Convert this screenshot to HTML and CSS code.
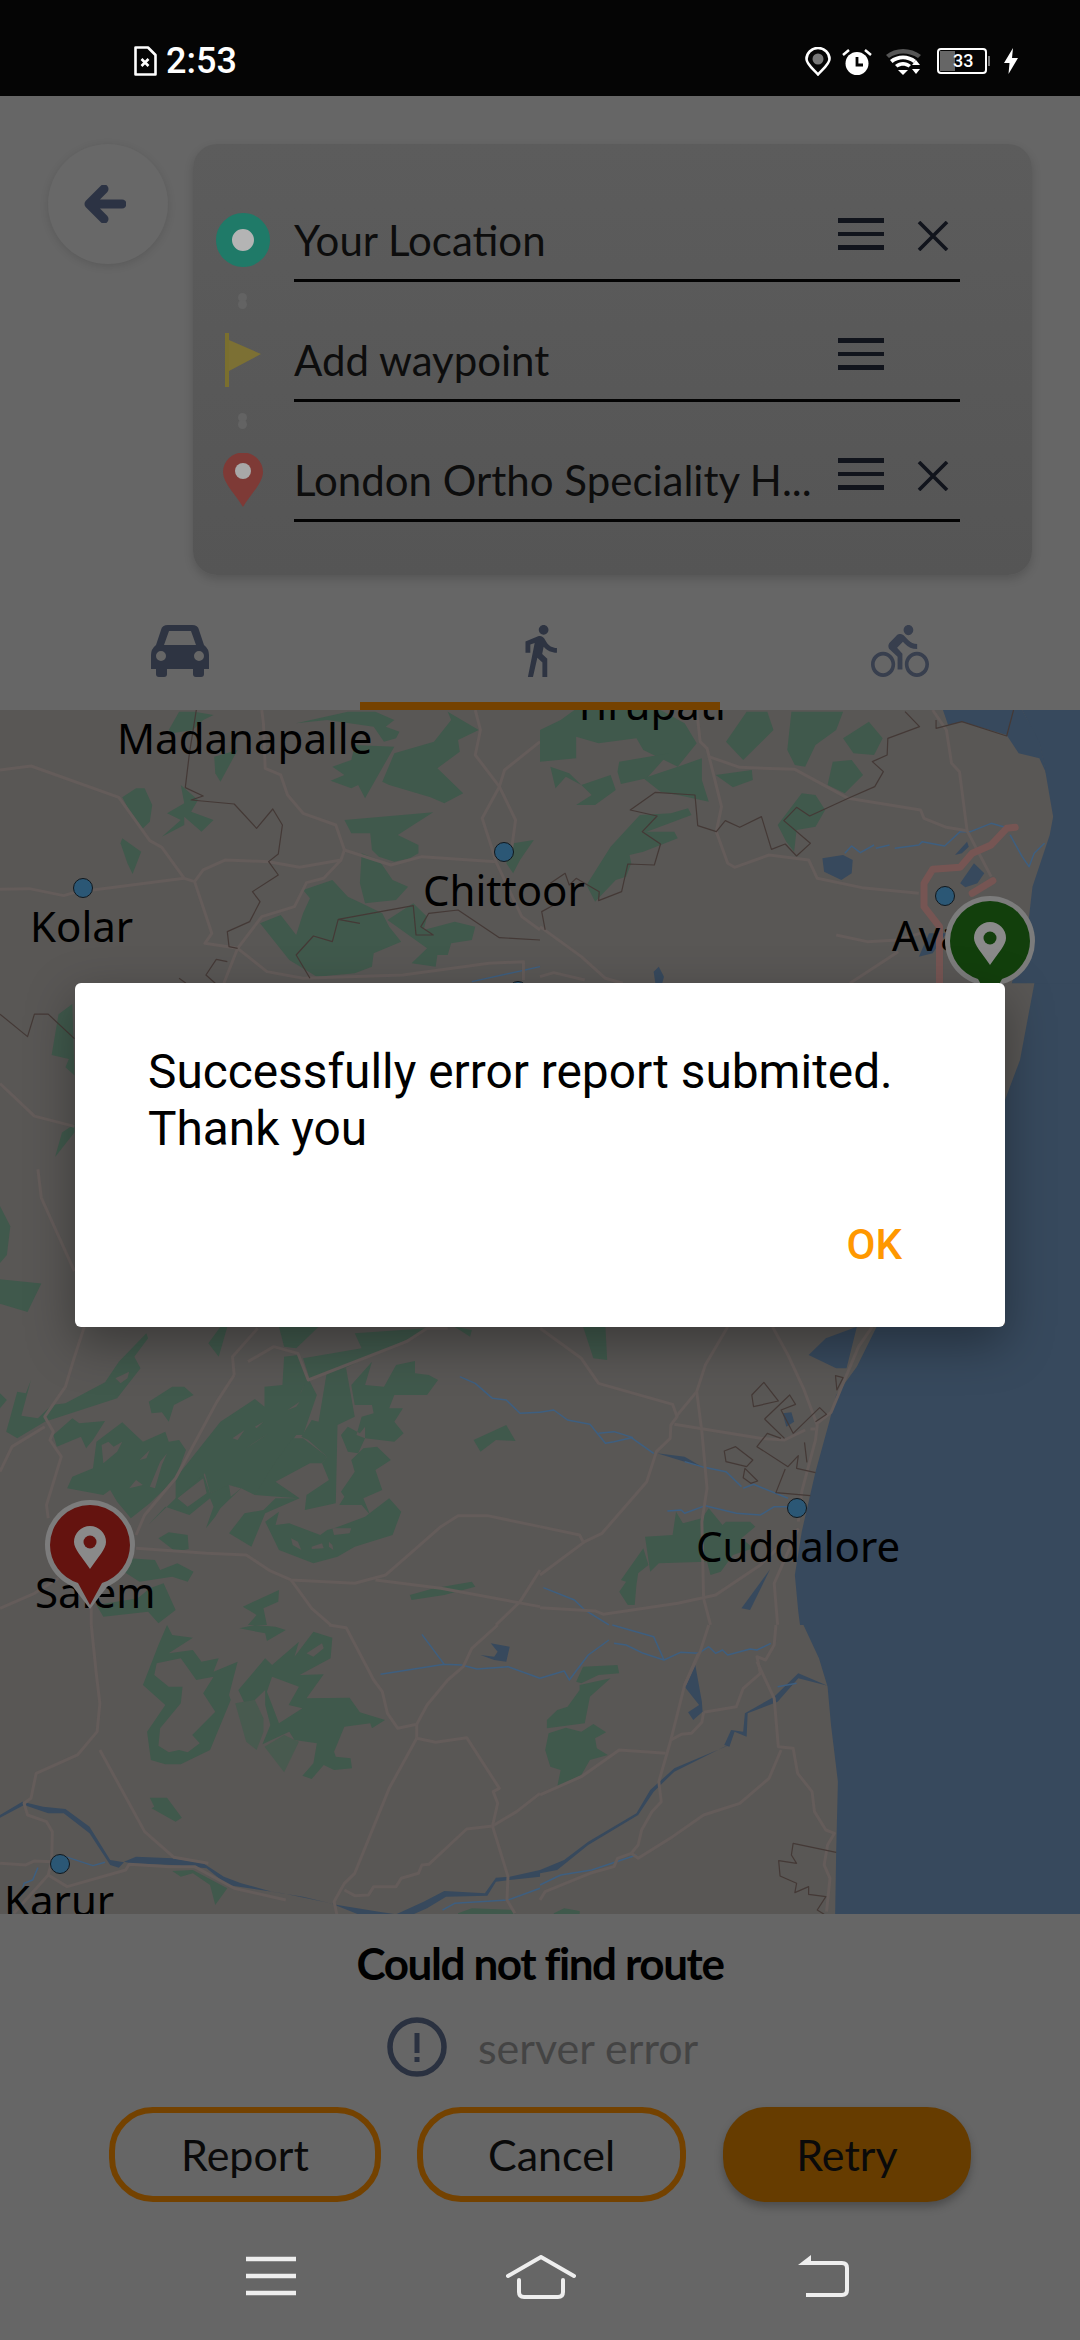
FILE: index.html
```html
<!DOCTYPE html>
<html>
<head>
    <meta charset="utf-8">
    <meta name="viewport" content="width=device-width,initial-scale=1">
    <title>Route</title>
    <link rel="stylesheet" href="styles.css">
</head>
<body>
<div class="phone">

    <div class="status">
        <svg class="st-sim" viewBox="0 0 24 30"><path d="M2.500 1.500H15L22.500 9V28.500H2.500Z" fill="none" stroke="#fff" stroke-width="2.600" stroke-linejoin="round"/><path d="M8.500 13L15.500 20M15.500 13L8.500 20" stroke="#fff" stroke-width="2.600"/></svg>
        <span class="st-time">2:53</span>
        <span class="st-fill"></span>
        <svg class="st-pin" viewBox="0 0 26 29"><path d="M13 27.500C8 22 1.500 17 1.500 12A11.500 11 0 0 1 24.500 12C24.500 17 18 22 13 27.500Z" fill="none" stroke="#fff" stroke-width="2.600"/><circle cx="13" cy="12" r="5.500" fill="#777"/></svg>
        <svg class="st-alarm" viewBox="0 0 30 27"><circle cx="15" cy="15.500" r="11.500" fill="#fff"/><path d="M1 7L7 2M29 7L23 2" stroke="#fff" stroke-width="2.500"/><path d="M15 9V17H21" fill="none" stroke="#050505" stroke-width="2.800"/></svg>
        <svg class="st-wifi" viewBox="0 0 37 27"><path d="M1 7C10 -1 26 -1 36 7L33 10C24 4 12 4 4 10Z" fill="#555"/><path d="M5 12C12 6 24 6 31 12L28.500 15C22 10 14 10 7.500 15Z" fill="#fff"/><path d="M10 17C15 13 21 13 26 17L23.500 19.500C20 17 16 17 12.500 19.500Z" fill="#fff"/><path d="M13 22H23L18 27Z" fill="#fff"/><path d="M27 17L31 12L35 17ZM27 21H35L31 26Z" fill="#fff"/></svg>
        <div class="st-batt"><div class="st-batt-box"><div class="st-batt-lvl"></div><span class="st-batt-num">33</span></div><div class="st-batt-tip"></div></div>
        <svg class="st-bolt" viewBox="0 0 14 26"><path d="M9 0L0 15H5.500L4.500 26L14 10H8Z" fill="#fff"/></svg>
    </div>

    <div class="app">

        <div class="top">
            <div class="searchrow">
                <div class="backbtn">
                    <svg width="42" height="38" viewBox="0 0 42 38"><path d="M38 19H8M20 4L5 19L20 34" fill="none" stroke="#2c3344" stroke-width="9" stroke-linecap="round" stroke-linejoin="round"/></svg>
                </div>
                <div class="card">
                    <div class="wp">
                        <div class="wp-icon"><svg width="54" height="54" viewBox="0 0 54 54"><circle cx="27" cy="27" r="19" fill="#b4b4b4" stroke="#1f7a68" stroke-width="16"/></svg></div>
                        <div class="field">
                            <span class="field-text">Your Location</span>
                            <span class="menu"><i></i><i></i><i></i></span>
                            <svg class="clear" viewBox="0 0 32 30"><path d="M2 1L30 29M30 1L2 29" stroke="#11141c" stroke-width="3.600"/></svg>
                        </div>
                    </div>
                    <div class="wp">
                        <div class="dots"><i></i><i></i></div>
                        <div class="wp-icon"><svg width="40" height="54" viewBox="0 0 40 54"><rect x="2" y="0" width="4" height="54" fill="#7a6f2e"/><path d="M6 7L38 21L6 38Z" fill="#7c7034"/></svg></div>
                        <div class="field">
                            <span class="field-text">Add waypoint</span>
                            <span class="menu"><i></i><i></i><i></i></span>
                            <span class="clear"></span>
                        </div>
                    </div>
                    <div class="wp">
                        <div class="dots"><i></i><i></i></div>
                        <div class="wp-icon"><svg width="40" height="54" viewBox="0 0 40 54"><path d="M20 54C13 42 0 30 0 19A20 19.500 0 0 1 40 19C40 30 27 42 20 54Z" fill="#7e3a36"/><circle cx="20" cy="18" r="8" fill="#a8a8a8"/></svg></div>
                        <div class="field">
                            <span class="field-text">London Ortho Speciality H...</span>
                            <span class="menu"><i></i><i></i><i></i></span>
                            <svg class="clear" viewBox="0 0 32 30"><path d="M2 1L30 29M30 1L2 29" stroke="#11141c" stroke-width="3.600"/></svg>
                        </div>
                    </div>
                </div>
            </div>
            <div class="tabs">
                <div class="tab">
                    <svg width="58" height="52" viewBox="0 0 58 52"><path fill-rule="evenodd" fill="#2e3442" d="M10 5Q11 0 17 0H41Q47 0 48 5L53 20Q58 24 58 30V44H53V49Q53 52 50 52H45Q42 52 42 49V44H16V49Q16 52 13 52H8Q5 52 5 49V44H0V30Q0 24 5 20ZM13 20H45L40 6H18ZM10 26A5 5 0 1 0 10 36A5 5 0 1 0 10 26ZM48 26A5 5 0 1 0 48 36A5 5 0 1 0 48 26Z"/></svg>
                </div>
                <div class="tab tab-on">
                    <svg width="34" height="52" viewBox="5 1.500 14 21.500"><path fill="#2e3442" d="M13.500 5.500c1.100 0 2-.9 2-2s-.9-2-2-2-2 .9-2 2 .9 2 2 2zM9.800 8.900L7 23h2.100l1.800-8 2.100 2v6h2v-7.500l-2.100-2 .6-3C14.800 12 16.800 13 19 13v-2c-1.900 0-3.500-1-4.300-2.400l-1-1.600c-.4-.6-1-1-1.700-1-.3 0-.5.100-.8.100L6 8.300V13h2V9.600l1.800-.7"/></svg>
                </div>
                <div class="tab">
                    <svg width="58" height="52" viewBox="0 1.500 24 20.500" preserveAspectRatio="none"><path fill="#383f4e" d="M15.500 5.500c1.100 0 2-.9 2-2s-.9-2-2-2-2 .9-2 2 .9 2 2 2zM5 12c-2.800 0-5 2.200-5 5s2.200 5 5 5 5-2.200 5-5-2.200-5-5-5zm0 8.500c-1.900 0-3.500-1.600-3.500-3.500s1.600-3.500 3.500-3.500 3.500 1.600 3.500 3.500-1.600 3.500-3.500 3.500zm5.800-10l2.400-2.400.8.800c1.300 1.300 3 2.100 5.100 2.100V9c-1.500 0-2.700-.6-3.600-1.500l-1.900-1.900c-.5-.4-1-.6-1.600-.6s-1.100.2-1.400.6L7.800 8.400c-.4.400-.6.900-.6 1.400 0 .6.200 1.100.6 1.400L11 14v5h2v-6.200l-2.200-2.300zM19 12c-2.800 0-5 2.200-5 5s2.200 5 5 5 5-2.200 5-5-2.200-5-5-5zm0 8.500c-1.900 0-3.500-1.600-3.500-3.500s1.600-3.500 3.500-3.500 3.500 1.600 3.500 3.500-1.600 3.500-3.500 3.500z"/></svg>
                </div>
            </div>
        </div>

        <div class="mapbox">
            <svg class="map" viewBox="0 710 1080 1204">
                <rect x="0" y="710" width="1080" height="1204" class="land"/>
                <path class="water" d="M1035 980L1020 1060L1005 1100V1340H1080V980Z"/>

                <!-- top left -->
                <g transform="translate(0 710) scale(.3444 .3333)">
                    <path class="forest" d="M490 60L520 5L565 5L620 15L590 30L560 60L500 70Z"/>
                    <path class="forest" d="M622 140L690 120L640 215L625 190Z"/>
                    <path class="forest" d="M860 40L1010 5L1090 5L1145 30L1120 50L1160 65L1150 85L1115 95L1085 50L950 30Z"/>
                    <path class="forest" d="M1300 5L1390 60L1330 90L1335 125L1270 175L1345 250L1290 280L1250 262L1130 225L1110 215L1145 130L1260 95L1310 30Z"/>
                    <path class="forest" d="M965 170L1020 150L1030 105L1145 110L1060 265L1040 225L1020 235L960 212L1000 195Z"/>
                    <path class="forest" d="M1000 330L1258 307L1200 345L1155 375L1215 405L1215 430L1190 445L1145 455L1100 440L1080 420L1075 370L1020 370Z"/>
                    <path class="forest" d="M355 262L395 235L420 235L442 285L435 335L410 360L385 320Z"/>
                    <path class="forest" d="M355 385L410 425L385 492L370 460L350 400Z"/>
                    <path class="forest" d="M525 225L575 270L555 305L620 330L585 365L535 320L535 345L470 380L525 330L485 310L535 280Z"/>
                    <path class="forest" d="M1050 430L1100 450L1140 510L1185 530L1150 570L1060 580L1045 520Z"/>
                    <path class="forest" d="M880 540L965 510L1010 560L1050 580L1110 610L1130 650L1165 695L1085 730L1080 770L1030 790L920 800L840 750L755 640L815 615L860 675L880 610L900 565Z"/>
                    <path class="forest" d="M1125 630L1200 580L1240 620L1230 660L1320 635L1380 650L1370 690L1310 700L1300 735L1270 735L1265 770L1195 760L1240 715Z"/>
                    <path class="forest" d="M1490 400L1550 390L1510 450L1490 490L1470 460Z"/>
                    <path class="river" d="M1370 815L1568 770"/>
                    <path class="road" d="M0 180L90 168L345 262L435 392L470 412L535 505L565 515L615 670L595 700L690 715L775 785L880 805L1170 795L1420 760L1520 755L1520 810"/>
                    <path class="road" d="M0 538L85 536L185 557L240 540L270 540L535 505"/>
                    <path class="road" d="M565 515L590 480L655 450L780 455L870 472L990 450L1000 420L975 345L880 310L835 255L815 195L770 175L765 40L760 0"/>
                    <path class="road" d="M1000 420L1135 465L1225 440L1440 455"/>
                    <path class="road" d="M990 450L940 505L890 518L855 590L760 620L690 715L650 820"/>
                    <path class="road" d="M1380 0L1395 60L1380 135L1450 230L1400 325L1430 420L1440 455L1515 620L1568 660"/>
                    <path class="road" d="M1568 95L1465 180L1450 230L1497 330L1485 420"/>
                    <path class="line" d="M570 0L550 130L538 233L590 258L555 270L680 282L745 355L792 297L820 345L808 432L780 455L808 495L733 545L755 575L725 635L660 665L665 710L690 715"/>
                    <path class="line" d="M660 755L628 748L598 795L625 820M520 805L540 820"/>
                    <path class="line" d="M900 805L860 735L910 678L965 695L982 628L1045 640M982 628L1200 587L1208 675L1258 675L1222 650L1245 610L1330 600L1450 683L1568 690"/>
                </g>

                <!-- top right -->
                <g transform="translate(540 710) scale(.3444 .3333)">
                    <path class="forest" d="M0 60L60 30L100 0L350 0L420 40L455 100L400 170L300 120L280 85L170 100L105 80L105 145L0 155Z"/>
                    <path class="forest" d="M230 155L375 130L310 205L235 222L225 185Z"/>
                    <path class="forest" d="M300 205L400 170L470 145L470 210L490 275L400 255L350 245Z"/>
                    <path class="forest" d="M540 95L600 5L660 5L678 60L590 150Z"/>
                    <path class="forest" d="M510 195L615 180L618 210L560 232Z"/>
                    <path class="forest" d="M730 5L880 5L860 60L800 105L770 170L740 165L718 120Z"/>
                    <path class="forest" d="M880 85L955 35L995 85L970 135L910 130Z"/>
                    <path class="forest" d="M850 155L905 150L938 195L885 250L835 225Z"/>
                    <path class="forest" d="M690 345L760 250L800 255L828 300L800 350L745 360L738 425L715 395Z"/>
                    <path class="forest" d="M120 225L205 195L220 240L160 285L105 285L150 255Z"/>
                    <path class="forest" d="M30 170L85 190L120 225L75 200L45 235Z"/>
                    <path class="forest" d="M135 525L205 410L290 315L380 310L430 295L440 315L310 365L390 365L400 385L300 425L260 435L265 460L250 500L220 510L160 575Z"/>
                    <path class="water" d="M1400 0H1568V820H1370L1420 620L1430 530L1480 375L1490 320L1465 170L1450 100Z"/>
                    <path class="water" d="M1170 0H1375L1355 75L1225 35L1185 45Z"/>
                    <path class="water" d="M1355 75L1390 130L1450 145L1470 190L1450 95L1400 0H1375Z"/>
                    <path class="water" d="M820 445L880 435L908 450L905 490L875 510L825 485Z"/>
                    <path class="water" d="M1205 435L1240 395L1245 410L1225 430Z"/>
                    <path class="water" d="M1220 520L1260 460L1290 490L1270 520L1235 532Z"/>
                    <path class="water" d="M1100 740L1130 670L1180 670L1140 730Z"/>
                    <path class="water" d="M330 785L345 770L360 800L355 820L335 820Z"/>
                    <path class="river" d="M885 430L905 408L930 428L970 405M975 415L1015 405M1030 415L1100 405L1110 395L1175 408L1220 365L1250 365L1310 340L1360 355"/>
                    <path class="river" d="M1365 375L1400 440L1420 470L1435 430L1465 400"/>
                    <path class="road" d="M455 0L465 95L485 115L527 290L512 365L545 460L565 472L665 435L780 450L805 505L935 533L1100 550"/>
                    <path class="road" d="M490 140L580 172L740 178L895 265L1105 300L1115 325L1180 352L1240 362"/>
                    <path class="road" d="M1140 0L1180 60L1195 160L1218 185L1240 362L1310 500"/>
                    <path class="road" d="M860 675L950 695L1040 690L1120 665M900 820L1040 725M0 650L120 740L190 805L240 820M0 800L40 788L130 810"/>
                    <path class="route" d="M1380 352L1355 355L1310 405L1255 430L1220 472L1140 478L1115 520L1115 590L1160 650L1160 820"/>
                    <path class="route" d="M1315 512L1255 550"/>
                    <path class="line" d="M1060 5L1102 50L1010 85L1008 135L965 155L997 185L972 230L895 265L783 318L745 292L708 332L785 400L745 438L712 402L672 418L643 320L580 352L538 332L512 365L458 347L450 255L335 247L262 300L340 318L297 365L350 402L332 465L255 462L237 545L170 572L172 545L105 505L85 525L73 490L30 520"/>
                    <path class="line" d="M40 585L5 605L15 660M1150 30L1150 55L1225 35L1355 78L1375 0"/>
                </g>

                <!-- beside the dialog, left -->
                <g transform="translate(0 700) scale(.6887 .408)">
                    <path class="forest" d="M105 745L85 770L75 870L100 880L95 900L108 920Z"/>
                    <path class="forest" d="M108 1040L90 1060L80 1120L108 1060Z"/>
                    <path class="forest" d="M0 1240L15 1290L10 1360L0 1380Z"/>
                    <path class="forest" d="M0 1420L60 1430L40 1500L0 1480Z"/>
                    <path class="road" d="M0 940L50 1020L108 1045M55 1150L60 1220L108 1400"/>
                    <path class="line" d="M0 770L40 825L50 770L70 770L108 830"/>
                </g>

                <!-- middle left -->
                <g transform="translate(0 1325) scale(.3444 .3333)">
                    <path class="forest" d="M0 205L20 225L0 250Z"/>
                    <path class="forest" d="M50 200L75 205L90 165L62 272L110 280L150 240L190 235L305 172L345 110L425 25L430 40L390 95L408 130L340 220L130 290L50 340L18 320Z"/>
                    <path class="land" d="M335 160L375 140L370 160L350 175Z"/>
                    <path class="forest" d="M432 230L500 185L535 185L562 210L505 240L490 290L470 262L440 265Z"/>
                    <path class="forest" d="M155 330L210 280L230 295L305 288L270 345L250 370L235 335L165 365Z"/>
                    <path class="forest" d="M195 490L210 455L270 430L280 350L355 292L415 350L480 320L490 350L520 345L540 375L510 460L435 535L380 580L340 530L320 495L300 510Z"/>
                    <path class="land" d="M295 360L315 350L330 365L355 350L340 380L300 415ZM405 405L435 375L425 400ZM375 490L395 465L415 480ZM435 485L465 410L485 385L470 420L450 490Z"/>
                    <path class="forest" d="M430 600L510 520L590 445L610 505L660 480L700 490L640 550L625 575L598 610L620 545L610 520L550 570L480 545Z"/>
                    <path class="land" d="M515 520L590 460L600 505L545 545ZM665 480L700 490L670 515Z"/>
                    <path class="forest" d="M510 460L640 290L740 222L768 245L768 185L820 180L825 95L865 90L895 160L920 210L880 330L860 330L815 400L740 510L700 490L665 480L610 505L595 445L510 525Z"/>
                    <path class="land" d="M675 340L710 315L690 345ZM740 305L765 290L745 310ZM715 370L780 325L735 355ZM835 255L870 230L860 245ZM870 210L885 175L875 200Z"/>
                    <path class="forest" d="M665 625L710 565L765 555L800 520L865 520L740 510L800 410L850 340L880 340L950 395L935 415L900 415L800 470L870 520L770 565L730 665Z"/>
                    <path class="forest" d="M885 555L890 510L955 465L935 415L950 395L895 345L875 335L905 285L925 290L950 135L1005 130L1030 275L980 300L975 535Z"/>
                    <path class="forest" d="M990 500L1030 440L1020 405L1055 370L1095 365L1135 405L1090 435L1110 495L1055 520L1075 570L1050 540L985 540L1000 515Z"/>
                    <path class="forest" d="M990 330L1010 305L1045 325L1060 305L1060 340L1145 350L1172 325L1145 290L1170 250L1130 250L1145 210L1240 210L1272 165L1245 150L1205 145L1205 108L1150 120L1115 185L1060 180L1080 110L1020 180L1030 240L1080 240L1085 265L1050 275L1035 330L1060 340L1040 385L1010 380Z"/>
                    <path class="forest" d="M770 590L810 560L800 600L840 595L930 630L950 615L970 610L1060 575L1130 520L1165 560L1140 630L1030 665L980 695L910 715L810 675Z"/>
                    <path class="land" d="M845 640L865 650L875 675L850 660ZM905 665L935 655L940 670L905 672ZM955 650L965 660L968 675L955 665ZM965 610L1020 610L1015 625L970 630Z"/>
                    <path class="forest" d="M880 100L1050 70L1030 25L1240 10L1210 30L1040 110L1000 130L945 145L900 165Z"/>
                    <path class="forest" d="M810 5L925 5L880 50L860 70L825 65ZM605 55L640 5L660 5L635 95ZM1320 5L1370 15L1365 35Z"/>
                    <path class="forest" d="M1375 345L1470 300L1497 348L1440 345L1395 380Z"/>
                    <path class="forest" d="M460 640L490 622L545 630L548 672L510 680Z"/>
                    <path class="forest" d="M375 700L450 705L465 735L515 715L562 740L545 770L500 755L405 770L360 740Z"/>
                    <path class="forest" d="M435 790L475 775L510 855L460 895L430 860L300 875L280 840L400 820Z"/>
                    <path class="forest" d="M705 845L810 795L808 830L765 850L775 900L720 900L745 870Z"/>
                    <path class="forest" d="M1190 810L1260 790L1370 770L1380 785L1290 810L1195 825Z"/>
                    <path class="river" d="M1335 155L1380 175L1430 220L1470 225L1510 265L1568 262"/>
                    <path class="road" d="M245 5L215 100L190 185L130 275L155 320L145 345L178 395L135 540L140 580"/>
                    <path class="road" d="M0 440L35 365L130 305M0 850L100 805L170 760M265 830L265 900"/>
                    <path class="road" d="M680 150L675 95L748 10M680 150L630 230L510 460L420 570L395 630"/>
                    <path class="road" d="M720 110L795 65L865 85L895 165L1180 50L1240 10L1300 10"/>
                    <path class="road" d="M395 670L600 685L715 690L785 738L845 765L1030 775L1120 750L1170 705L1280 605L1330 572L1415 572L1568 605"/>
                    <path class="road" d="M845 765L905 850L960 900M1090 765L1280 790L1568 845M1568 735L1510 830L1440 900"/>
                </g>

                <!-- middle right -->
                <g transform="translate(540 1325) scale(.3444 .3333)">
                    <path class="water" d="M980 0L920 125L860 210L840 290L800 440L780 530L760 620L740 750L750 860L755 900H1568V0Z"/>
                    <path class="water" d="M780 90L830 40L895 15L920 5L890 130L860 130Z"/>
                    <path class="water" d="M705 265L730 262L738 290L715 305Z"/>
                    <path class="water" d="M340 385L420 395L470 425L420 410Z"/>
                    <path class="water" d="M585 850L668 733L610 855Z"/>
                    <path class="forest" d="M125 5L190 5L195 105L155 100Z"/>
                    <path class="forest" d="M395 560L415 595L470 580L490 550L530 600L540 590L610 590L625 605L585 640L620 670L560 690L525 740L495 750L485 710L345 715L320 740L305 635L385 630Z"/>
                    <path class="forest" d="M300 670L315 720L285 745L280 780L275 840L255 840L230 800L250 770L235 765Z"/>
                    <path class="river" d="M0 262L40 255L80 285L145 298L190 355L215 350L265 338L330 385M170 325L215 320L270 338"/>
                    <path class="river" d="M420 410L470 425L540 440L585 485M590 490L620 478L720 520"/>
                    <path class="river" d="M370 558L410 555L420 565L480 542L570 565L640 570L680 545L720 545"/>
                    <path class="river" d="M10 788L100 825L130 855L200 900"/>
                    <path class="road" d="M0 10L120 100L170 175L385 238L398 275L380 300L378 340L338 380L310 470L180 625L130 650L0 750"/>
                    <path class="road" d="M395 275L455 200L480 120L545 5"/>
                    <path class="road" d="M455 200L470 320L485 490L470 590L475 820L495 900"/>
                    <path class="road" d="M390 298L640 340L710 345L770 315M785 312L800 312"/>
                    <path class="road" d="M675 5L720 90L765 190L805 300L800 345L760 500L750 590"/>
                    <path class="road" d="M805 295L845 262L880 175L925 65L965 5"/>
                    <path class="road" d="M0 605L115 630L125 650"/>
                    <path class="road" d="M0 848L160 858L185 868L400 835L510 810L640 720L720 640"/>
                    <path class="road" d="M750 610L680 775L690 900"/>
                    <path class="line" d="M615 210L650 172L692 228L620 245Z"/>
                    <path class="line" d="M652 282L725 210L742 238L700 255L735 325L812 248L832 268L800 290M652 282L710 340"/>
                    <path class="line" d="M700 340L660 325L630 365L720 425L750 392L745 430L800 443M712 432L685 503L785 512M768 352L775 412"/>
                    <path class="line" d="M535 378L568 365L618 405L600 425L540 410Z"/>
                    <path class="line" d="M595 430L632 468L612 475L590 458Z"/>
                    <path class="line" d="M858 152L880 158L862 195Z"/>
                </g>

                <!-- bottom left -->
                <g transform="translate(0 1625) scale(.3444 .3333)">
                    <path class="forest" fill-rule="evenodd" d="M485 0L500 30L560 38L490 85L560 75L585 110L635 100L620 140L690 110L665 210L670 225L610 375L525 418L480 418L438 405L427 320L480 240L415 180L460 60ZM455 115L525 100L570 165L620 155L590 205L625 260L558 330L580 355L545 382L520 375L490 382L460 362L465 310L525 235L530 185L490 185L448 150Z"/>
                    <path class="forest" d="M695 10L740 0L800 5L830 15L775 48L770 25Z"/>
                    <path class="forest" fill-rule="evenodd" d="M692 195L770 100L790 120L868 50L855 95L910 20L965 38L960 100L870 150L940 148L890 220L1015 218L1045 262L1118 285L1080 310L1075 295L1000 305L970 380L975 395L1018 400L1022 430L970 435L940 420L905 462L878 452L910 415L920 355L855 345L840 320L762 358L785 300L770 240L770 195L740 225L710 235ZM790 155L868 185L838 240L878 250L810 295L790 240L775 200ZM890 85L935 55L940 70L910 95Z"/>
                    <path class="forest-pale" d="M683 235L740 225L765 280L765 320L745 375L715 350Z"/>
                    <path class="forest-pale" d="M768 365L825 330L868 350L825 442Z"/>
                    <path class="forest" d="M435 518L485 518L528 578L510 590L440 550L448 545Z"/>
                    <path class="forest" d="M500 738L560 735L660 790L625 840L610 780L560 745L525 755Z"/>
                    <path class="forest" d="M1330 865L1370 850L1490 855L1495 870H1330Z"/>
                    <path class="water" d="M360 710L395 695L500 700L590 715L650 755L700 775L790 800L880 815L980 840L1100 860L1150 868L1040 868L960 835L820 805L660 780L600 730L500 720L380 715Z"/>
                    <path class="water" d="M0 570L65 530L125 545L190 552L260 605L320 705L360 712L345 728L320 720L260 625L185 565L140 565L70 540L0 578Z"/>
                    <path class="water" d="M1150 868L1230 830L1290 798L1408 805L1440 758L1480 755L1568 735V755L1480 765L1440 770L1415 812L1295 815L1240 850L1200 868Z"/>
                    <path class="water" d="M1425 55L1480 65L1470 110L1435 105L1395 90L1435 95L1445 80Z"/>
                    <path class="river" d="M1285 855L1320 835L1475 825L1568 790M190 695L270 722L305 712M110 728L95 765L70 775L60 810"/>
                    <path class="river" d="M1105 148L1290 118L1340 120L1385 132L1475 125L1568 160M1225 28L1290 118"/>
                    <path class="road" d="M265 0L280 150L290 235L282 320L225 390L105 445L90 520L70 535L80 570L135 590L152 620L150 710L100 708L75 720L0 715"/>
                    <path class="road" d="M150 710L140 750L195 785L365 735L375 718L490 725L565 725L680 790L830 825M140 750L40 865"/>
                    <path class="road" d="M290 375L420 620L505 697L605 715"/>
                    <path class="road" d="M955 0L1005 8L1085 165L1110 200L1125 265L1155 310L1210 298L1210 340L1130 490L1030 745L1000 775L970 830L978 868"/>
                    <path class="road" d="M1000 795L1030 812L1070 810L1085 785L1150 785L1165 760L1215 745L1225 720L1245 718L1355 612L1430 603L1500 560L1568 505"/>
                    <path class="road" d="M1445 0L1370 70L1345 125L1300 165L1240 240L1210 298"/>
                    <path class="road" d="M1210 340L1265 352L1355 338L1450 490L1432 500L1445 535L1430 603L1475 755L1472 825L1495 865"/>
                </g>

                <!-- bottom right -->
                <g transform="translate(540 1625) scale(.3444 .3333)">
                    <path class="water" d="M765 0L810 100L835 185L845 300L865 470L860 680L857 870H1568V0Z"/>
                    <path class="forest" d="M125 125L225 120L230 145L170 150L120 175L105 170Z"/>
                    <path class="forest" d="M115 180L205 160L145 215L130 295L20 310L20 285L50 255L80 245L115 195Z"/>
                    <path class="forest" d="M25 325L75 308L120 320L155 297L192 322L160 340L165 370L197 390L145 405L120 450L50 485L60 435L30 425L15 375Z"/>
                    <path class="forest" d="M40 865L70 850L115 858V870H40Z"/>
                    <path class="water" d="M420 185L450 115L470 230L472 260L445 285L430 262L462 240Z"/>
                    <path class="water" d="M595 265L680 215L750 145L835 182L750 160L690 230L603 265L600 335L565 320L550 365L535 360L555 315L590 320Z"/>
                    <path class="water" d="M0 735L70 705L140 650L280 565L320 495L390 430L550 360L535 365L390 440L330 500L285 570L140 660L50 735L0 745Z"/>
                    <path class="river" d="M210 0L330 35L360 105L408 82L460 85L490 65L510 85L530 75L545 90L610 72L630 75L670 55M215 55L250 60L300 85L360 105"/>
                    <path class="river" d="M0 160L70 138L85 165L140 90L200 45M690 185L745 175"/>
                    <path class="river" d="M0 780L60 750L150 735L280 690"/>
                    <path class="road" d="M490 0L465 80L420 180L380 345L345 470L352 530L325 560L295 615L285 660L265 685L225 700L215 725L145 745L15 800L0 825"/>
                    <path class="road" d="M460 85L420 180M475 262L570 245L590 190L640 145L630 95L655 105L680 60L685 0"/>
                    <path class="road" d="M380 345L410 328L440 325L470 292L475 262"/>
                    <path class="road" d="M630 110L680 220L692 365L735 370L748 445L790 500L797 560L830 615L855 625L835 660L825 720L842 760L832 860"/>
                    <path class="road" d="M0 510L120 455L230 375L365 385"/>
                    <path class="road" d="M700 375L665 460L580 535L475 570L385 635L285 700L265 685"/>
                    <path class="line" d="M860 682L735 655L730 690L745 715L693 707L697 753L745 775L740 803L780 785L780 808L830 815L805 855L825 868"/>
                </g>

                <circle class="city" cx="83" cy="888" r="9.500"/>
                <circle class="city" cx="504" cy="852" r="9.500"/>
                <circle class="city" cx="945" cy="896" r="9.500"/>
                <circle class="city" cx="518" cy="991" r="9.500"/>
                <circle class="city" cx="797" cy="1508" r="9.500"/>
                <circle class="city" cx="60" cy="1864" r="9.500"/>

                <text class="label" x="573" y="720">Tirupati</text>
                <text class="label" x="117" y="754">Madanapalle</text>
                <text class="label" x="423" y="906">Chittoor</text>
                <text class="label" x="30" y="942">Kolar</text>
                <text class="label" x="892" y="951">Avadi</text>
                <text class="label" x="696" y="1562">Cuddalore</text>
                <text class="label" x="35" y="1608">Salem</text>
                <text class="label" x="4" y="1916">Karur</text>

                <g transform="translate(990 941)">
                    <circle r="45" class="pin-ring"/>
                    <path class="pin-green" d="M-40 0A40 40 0 1 1 40 0A40 40 0 0 1 12 38L0 60L-12 38A40 40 0 0 1 -40 0Z"/>
                    <path class="pin-glyph" d="M0 24C-8 12 -16 4 -16 -3A16 16 0 0 1 16 -3C16 4 8 12 0 24Z"/>
                    <circle cy="-3" r="6.500" class="pin-green"/>
                </g>
                <g transform="translate(90 1545)">
                    <circle r="45" class="pin-ring"/>
                    <path class="pin-ring" d="M-20 38H20L0 64Z"/>
                    <path class="pin-red" d="M-40 0A40 40 0 1 1 40 0A40 40 0 0 1 12 38L0 60L-12 38A40 40 0 0 1 -40 0Z"/>
                    <path class="pin-glyph" d="M0 24C-8 12 -16 4 -16 -3A16 16 0 0 1 16 -3C16 4 8 12 0 24Z"/>
                    <circle cy="-3" r="6.500" class="pin-red"/>
                </g>
            </svg>
        </div>

        <div class="result">
            <div class="result-title">Could not find route</div>
            <div class="result-msg">
                <svg width="60" height="60" viewBox="0 0 60 60"><circle cx="30" cy="30" r="27" fill="none" stroke="#2a3140" stroke-width="5.500"/><rect x="27.500" y="16" width="5" height="20" fill="#2a3140"/><rect x="27.500" y="40" width="5" height="5" fill="#2a3140"/></svg>
                <span>server error</span>
            </div>
            <div class="result-btns">
                <div class="btn btn-report">Report</div>
                <div class="btn btn-cancel">Cancel</div>
                <div class="btn btn-retry">Retry</div>
            </div>
        </div>

        <div class="dialog">
            <div class="dialog-text">Successfully error report submited.<br>Thank you</div>
            <div class="dialog-ok">OK</div>
        </div>
    </div>

    <div class="nav">
        <svg class="nav-menu" viewBox="0 0 50 42"><path d="M0 4H50M0 21H50M0 38H50" stroke="#eee" stroke-width="4.500"/></svg>
        <svg class="nav-home" viewBox="0 0 70 44"><path d="M2 21L35 2L68 21M13 25V37Q13 42 18 42H52Q57 42 57 37V25" fill="none" stroke="#eee" stroke-width="4" stroke-linecap="round" stroke-linejoin="round"/></svg>
        <svg class="nav-back" viewBox="0 0 51 42"><path d="M13 0V10H0Z" fill="#eee"/><path d="M10 8H44Q49 8 49 13V35Q49 40 44 40H8" fill="none" stroke="#eee" stroke-width="4"/></svg>
    </div>
</div>
</body>
</html>
```

FILE: styles.css
```css
* {
    box-sizing: border-box;
}

html, body {
    margin: 0;
    padding: 0;
}

.phone {
    display: flex;
    flex-direction: column;

    width: 1080px;
    height: 2340px;

    background-color: #666666;
    overflow: hidden;
}

/* status bar */
.status {
    display: flex;
    align-items: center;

    height: 96px;
    padding: 26px 62px 0 133px;

    background-color: #050505;
}

.st-sim {
    width: 24px;
    height: 30px;
}

.st-time {
    margin-left: 9px;

    font-family: Roboto, sans-serif;
    font-size: 36px;
    font-weight: 500;
    color: #ffffff;
}

.st-fill {
    flex: 1;
}

.st-pin {
    width: 26px;
    height: 29px;
}

.st-alarm {
    width: 30px;
    height: 27px;
    margin-left: 11px;
}

.st-wifi {
    width: 37px;
    height: 27px;
    margin-left: 13px;
}

.st-batt {
    display: flex;
    align-items: center;

    margin-left: 15px;
}

.st-batt-box {
    position: relative;

    width: 50px;
    height: 26px;

    border: 2px solid #ffffff;
    border-radius: 4px;
}

.st-batt-lvl {
    position: absolute;
    left: 1px;
    top: 1px;
    bottom: 1px;

    width: 15px;

    background-color: #666666;
}

.st-batt-num {
    position: absolute;
    left: 14px;
    top: 0;

    font-family: Roboto, sans-serif;
    font-size: 18px;
    font-weight: 500;
    line-height: 22px;
    color: #ffffff;
}

.st-batt-tip {
    width: 2px;
    height: 10px;
    margin-left: 1px;

    background-color: #777777;
}

.st-bolt {
    width: 14px;
    height: 26px;
    margin-left: 14px;
}

/* the app under the scrim */
.app {
    position: relative;

    display: flex;
    flex-direction: column;
    flex: 1;
}

.top {
    height: 614px;
}

.searchrow {
    display: flex;

    height: 479px;
    padding: 48px 48px 0 48px;
}

.backbtn {
    display: flex;
    align-items: center;
    justify-content: center;

    width: 120px;
    height: 120px;
    padding-right: 6px;

    border-radius: 50%;
    background-color: #686868;
    box-shadow: 0 2px 8px rgba(0, 0, 0, 0.12);
}

.card {
    width: 839px;
    height: 431px;
    margin-left: 25px;
    padding: 24px 0 0 0;

    border-radius: 24px;
    background: linear-gradient(#5c5c5c, #555555);
    box-shadow: 0 4px 10px rgba(0, 0, 0, 0.16);
}

.wp {
    position: relative;

    display: flex;

    height: 120px;
}

.wp-icon {
    display: flex;
    align-items: center;
    justify-content: center;

    width: 100px;
    height: 96px;
    padding-top: 48px;
    margin-top: 0;
}

.dots {
    position: absolute;
    left: 45px;
    top: 5px;

    display: flex;
    flex-direction: column;
}

.dots i {
    width: 9px;
    height: 9px;
    margin-bottom: -2px;

    border-radius: 50%;
    background-color: #636363;
}

.field {
    display: flex;
    align-items: flex-start;

    width: 666px;
    height: 114px;
    margin-left: 1px;

    border-bottom: 3px solid #030303;
}

.field-text {
    flex: 1;

    margin-top: 47px;

    font-family: Lato, sans-serif;
    font-size: 42px;
    line-height: 50px;
    color: #0d0d0d;
    white-space: nowrap;
}

.menu {
    display: flex;
    flex-direction: column;
    gap: 9px;

    width: 46px;
    margin-top: 50px;
}

.menu i {
    height: 4.500px;

    background-color: #11141c;
}

.clear {
    width: 32px;
    height: 30px;
    margin-top: 53px;
    margin-left: 33px;
    margin-right: 11px;
}

.tabs {
    display: flex;

    height: 135px;
}

.tab {
    display: flex;
    justify-content: center;

    flex: 1;
    padding-top: 50px;
}

.tab-on {
    border-bottom: 8px solid #754200;
}

/* map */
.mapbox {
    height: 1204px;
}

.map {
    display: block;

    width: 1080px;
    height: 1204px;
}

.land {
    fill: #595755;
}

.forest {
    fill: #40594c;
}

.forest-pale {
    fill: #485a4f;
}

.water {
    fill: #37495d;
}

.road, .line, .river, .route {
    fill: none;
    vector-effect: non-scaling-stroke;
    stroke-linejoin: round;
}

.road {
    stroke: #645c5a;
    stroke-width: 3;
}

.line {
    stroke: #443936;
    stroke-width: 1.200;
}

.river {
    stroke: #3e5f80;
    stroke-width: 1.500;
}

.route {
    stroke: #765553;
    stroke-width: 7;
    stroke-linecap: round;
}

.city {
    fill: #2b5775;
    stroke: #10181e;
    stroke-width: 1;
}

.label {
    font-family: "Noto Sans", sans-serif;
    font-size: 42px;
    fill: #000000;
}

.pin-ring {
    fill: #7c7c7c;
}

.pin-red {
    fill: #64130f;
}

.pin-green {
    fill: #123f0c;
}

.pin-glyph {
    fill: #8a8a8a;
}

/* bottom panel */
.result {
    display: flex;
    flex-direction: column;
    flex: 1;
}

.result-title {
    margin-top: 22px;

    font-family: Lato, sans-serif;
    font-size: 44px;
    font-weight: 700;
    line-height: 54px;
    letter-spacing: -1.400px;
    color: #000000;
    text-align: center;
}

.result-msg {
    display: flex;
    align-items: center;

    margin-top: 27px;
    padding-left: 387px;
    height: 60px;
}

.result-msg span {
    margin-left: 31px;

    font-family: Lato, sans-serif;
    font-size: 43px;
    color: #444444;
}

.result-btns {
    display: flex;

    margin-top: 30px;
    padding-left: 109px;
}

.btn {
    display: flex;
    align-items: center;
    justify-content: center;

    height: 95px;

    border: 6px solid #744200;
    border-radius: 44px;

    font-family: Lato, sans-serif;
    font-size: 43px;
    color: #0a0a0a;
}

.btn-report {
    width: 272px;
}

.btn-cancel {
    width: 269px;
    margin-left: 36px;
}

.btn-retry {
    width: 248px;
    margin-left: 37px;

    border: 0;
    background-color: #663c00;
    box-shadow: 0 5px 8px rgba(0, 0, 0, 0.25);
}

/* dialog over everything */
.dialog {
    position: absolute;
    left: 75px;
    top: 887px;

    width: 930px;
    height: 344px;
    padding: 61px 73px 0 73px;

    border-radius: 6px;
    background-color: #ffffff;
    box-shadow: 0 16px 48px rgba(0, 0, 0, 0.35);
}

.dialog-text {
    font-family: Roboto, sans-serif;
    font-size: 47.800px;
    line-height: 57px;
    color: #000000;
}

.dialog-ok {
    margin-top: 62px;
    padding-right: 30px;

    font-family: Roboto, sans-serif;
    font-size: 42px;
    font-weight: 500;
    color: #ff9800;
    text-align: right;
}

/* system nav */
.nav {
    display: flex;
    align-items: flex-start;

    height: 120px;
    padding: 35px 0 0 246px;
}

.nav-menu {
    width: 50px;
    height: 42px;
}

.nav-home {
    width: 70px;
    height: 44px;
    margin-left: 210px;
}

.nav-back {
    width: 51px;
    height: 42px;
    margin-left: 222px;
}
```
